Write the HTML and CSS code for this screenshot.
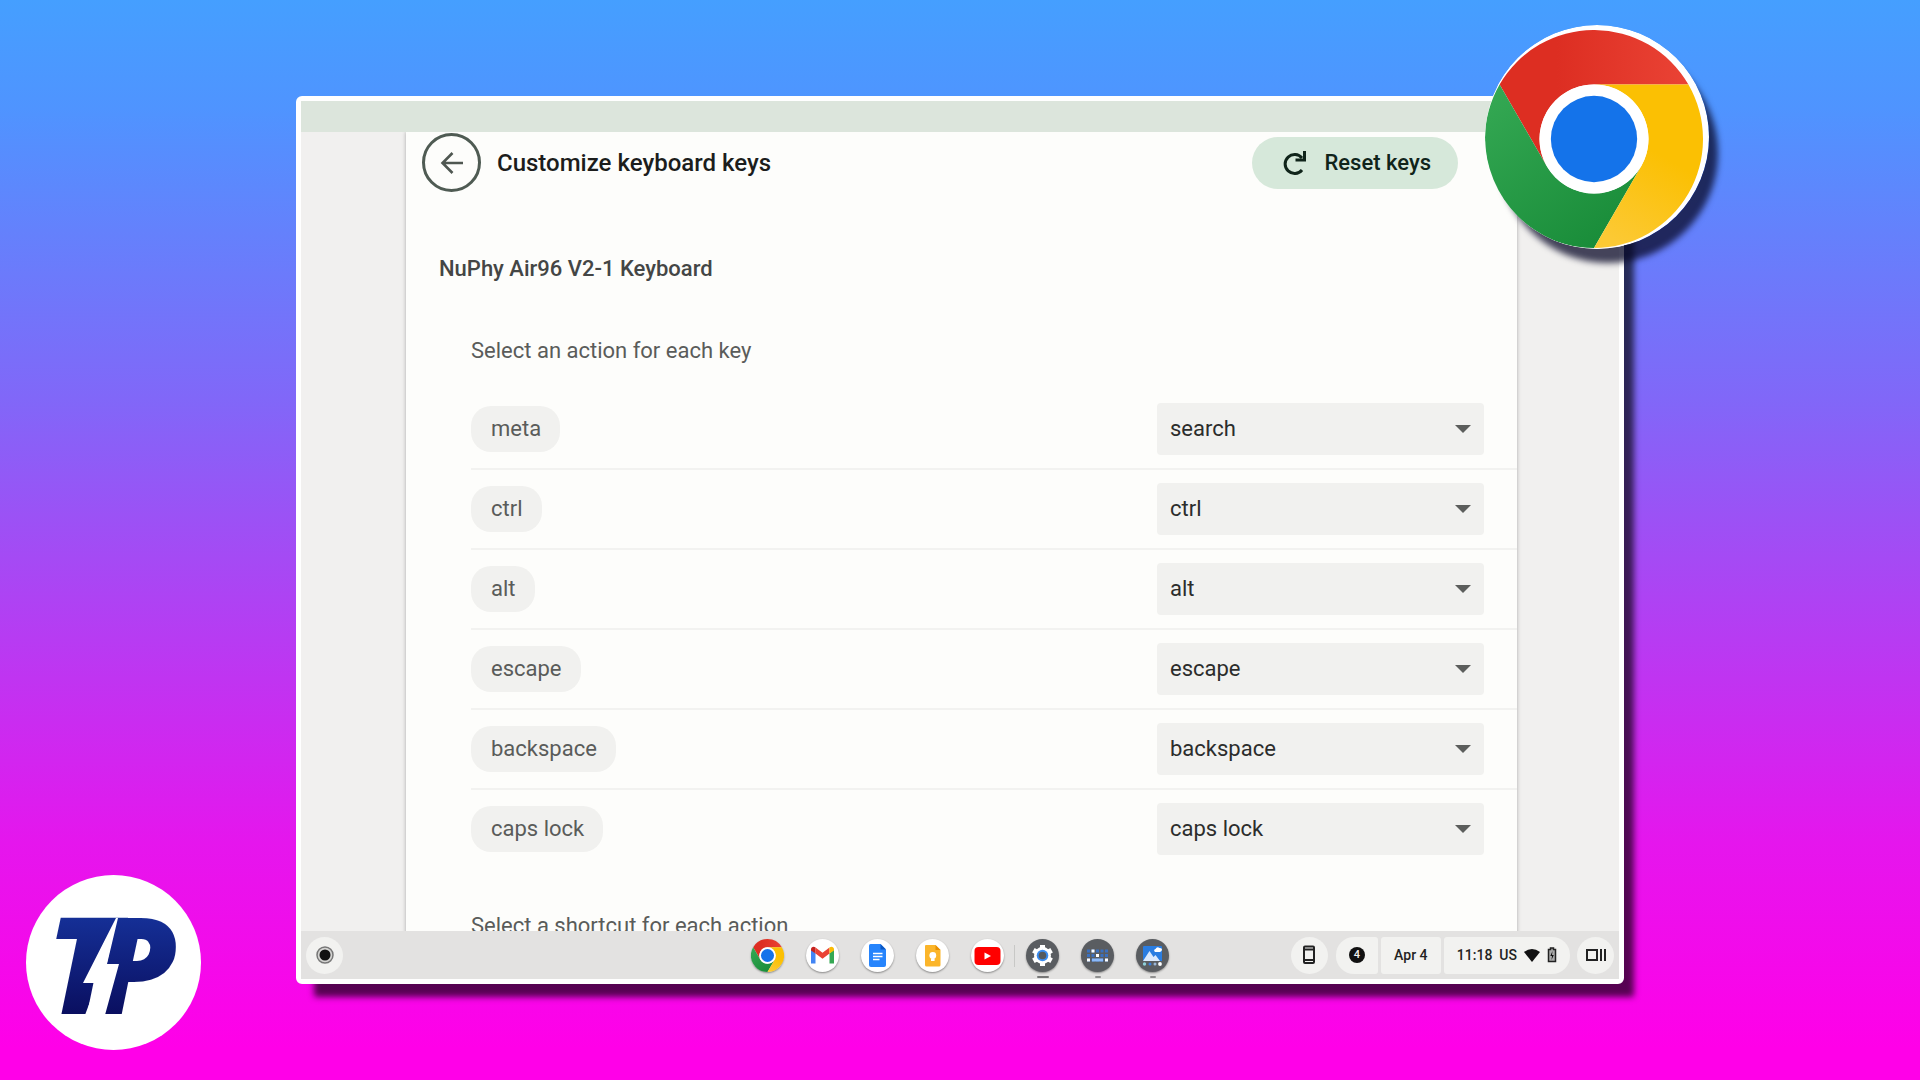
FILE: index.html
```html
<!DOCTYPE html>
<html lang="en">
<head>
  <meta charset="UTF-8" />
  <meta name="viewport" content="width=device-width, initial-scale=1.0"/>
  <title>Customize keyboard keys</title>
  <link rel="stylesheet" href="styles.css">
</head>
<body>

  <main class="screen">
    <div class="title-bar"></div>

    <div class="viewport">
      <div class="page">
        <header class="page-header">
          <button class="back-btn" aria-label="Back">
            <svg width="24" height="24" viewBox="0 0 24 24" fill="none" stroke="#4f5751" stroke-width="2.600"><path d="M23 12H3M12.500 2L2.500 12L12.500 22"/></svg>
          </button>
          <h1>Customize keyboard keys</h1>
          <button class="reset-btn">
            <svg width="26" height="26" viewBox="0 0 26 26" fill="none" stroke="#10241a" stroke-width="3"><path d="M21 20A9.500 9.500 0 1 1 21 8"/><path d="M23.500 1V10H14.500"/></svg>
            Reset keys
          </button>
        </header>

        <h2>NuPhy Air96 V2-1 Keyboard</h2>

        <section class="keys">
          <h3>Select an action for each key</h3>
          <div class="key-row">
            <label class="key" for="meta">meta</label>
            <div class="select-box">
              <select id="meta"><option>search</option><option>ctrl</option><option>alt</option></select>
            </div>
          </div>
          <div class="key-row">
            <label class="key" for="ctrl">ctrl</label>
            <div class="select-box">
              <select id="ctrl"><option>ctrl</option><option>search</option><option>alt</option></select>
            </div>
          </div>
          <div class="key-row">
            <label class="key" for="alt">alt</label>
            <div class="select-box">
              <select id="alt"><option>alt</option><option>search</option><option>ctrl</option></select>
            </div>
          </div>
          <div class="key-row">
            <label class="key" for="escape">escape</label>
            <div class="select-box">
              <select id="escape"><option>escape</option><option>search</option><option>ctrl</option></select>
            </div>
          </div>
          <div class="key-row">
            <label class="key" for="backspace">backspace</label>
            <div class="select-box">
              <select id="backspace"><option>backspace</option><option>search</option><option>ctrl</option></select>
            </div>
          </div>
          <div class="key-row">
            <label class="key" for="caps">caps lock</label>
            <div class="select-box">
              <select id="caps"><option>caps lock</option><option>search</option><option>ctrl</option></select>
            </div>
          </div>
        </section>

        <section class="keys shortcuts">
          <h3>Select a shortcut for each action</h3>
        </section>
      </div>
    </div>

    <footer class="shelf">
      <div class="shelf-start">
        <button class="round-btn" aria-label="Launcher">
          <svg width="18" height="18" viewBox="0 0 18 18"><circle cx="9" cy="9" r="8" fill="#d4d4d2" stroke="#777" stroke-width="1.500"/><circle cx="9" cy="9" r="5.500" fill="#111"/></svg>
        </button>
      </div>

      <nav class="apps">
        <button class="app" aria-label="Chrome">
          <svg viewBox="0 0 48 48"><use href="#chrome"/></svg>
        </button>
        <button class="app white" aria-label="Gmail">
          <svg viewBox="0 0 33 33">
            <path d="M5 10V24.500H9.500V14.500Z" fill="#4285f4"/>
            <path d="M28 10V24.500H23.500V14.500Z" fill="#34a853"/>
            <path d="M9.500 8.500L16.500 13.800L23.500 8.500V14.500L16.500 19.800L9.500 14.500Z" fill="#ea4335"/>
            <path d="M5 10.500C5 7.500 8 7 9.500 8.500V14.500L5 11.500Z" fill="#c5221f"/>
            <path d="M28 10.500C28 7.500 25 7 23.500 8.500V14.500L28 11.500Z" fill="#fbbc04"/>
          </svg>
        </button>
        <button class="app white" aria-label="Docs">
          <svg viewBox="0 0 33 33">
            <path d="M9.500 5H19.500L25 10.500V26Q25 28 23 28H10Q8 28 8 26V6.500Q8 5 9.500 5Z" fill="#2684fc"/>
            <path d="M19.500 5L25 10.500H19.500Z" fill="#0b58c4"/>
            <path d="M12 14.500H21.500M12 17.500H21.500M12 20.500H18.500" stroke="#fff" stroke-width="1.500"/>
          </svg>
        </button>
        <button class="app white" aria-label="Keep">
          <svg viewBox="0 0 33 33">
            <path d="M10 6H19.500L24.500 11V26Q24.500 27.500 23 27.500H10.500Q9 27.500 9 26V7Q9 6 10 6Z" fill="#fbb52a"/>
            <path d="M19.500 6L24.500 11H19.500Z" fill="#e88f00"/>
            <circle cx="16.800" cy="16.500" r="3.400" fill="#fff"/><path d="M15 19.500H18.600V22H15Z" fill="#fff"/>
          </svg>
        </button>
        <button class="app white" aria-label="YouTube">
          <svg viewBox="0 0 33 33"><rect x="3.500" y="8" width="26" height="18" rx="4" fill="#f00"/><path d="M13.500 13.500L20 17L13.500 20.500Z" fill="#fff"/></svg>
        </button>
        <button class="app dark separated running active" aria-label="Settings">
          <svg viewBox="0 0 33 33">
            <circle cx="16.500" cy="16.500" r="8.500" fill="#fff"/>
            <path d="M16.500 6V27M7.400 11.250L25.600 21.750M7.400 21.750L25.600 11.250" stroke="#fff" stroke-width="5"/>
            <circle cx="16.500" cy="16.500" r="5.800" fill="#3b8cf0"/><circle cx="16.500" cy="16.500" r="3.800" fill="#55595e"/>
          </svg>
        </button>
        <button class="app dark running" aria-label="Shortcuts">
          <svg viewBox="0 0 33 33">
            <path d="M6 12H27M6 16.500H27M6 21H27" stroke="#3a70c0" stroke-width="3" stroke-dasharray="3 1.500"/>
            <path d="M11 21H22" stroke="#8ab8f8" stroke-width="3"/>
            <path d="M6 21H9M24 21H27M10.500 12H13.500M15 16.500H18" stroke="#fff" stroke-width="3"/>
          </svg>
        </button>
        <button class="app dark running" aria-label="Screensaver">
          <svg viewBox="0 0 33 33">
            <path d="M8 7H25Q26 7 26 8V22H7V8Q7 7 8 7Z" fill="#2a7de1"/>
            <path d="M7 22L13.500 12L17.500 18L19.500 16L24 22Z" fill="#dbe9fc"/>
            <path d="M19 13Q17 11 19.500 10Q21 7 23.500 9Q27 9 25.500 12L24 13Z" fill="#fff"/>
            <circle cx="8.500" cy="25" r="1.700" fill="#8fd0d8"/><circle cx="14" cy="25" r="1.500" fill="#3b7fe0"/><circle cx="19" cy="25" r="1.500" fill="#9bb8d8"/><circle cx="24" cy="25" r="1.900" fill="#fff"/>
          </svg>
        </button>
      </nav>

      <div class="shelf-end">
        <button class="round-btn phone" aria-label="Phone Hub">
          <svg width="14" height="20" viewBox="0 0 14 20" fill="none" stroke="#222" stroke-width="2"><rect x="2" y="1.500" width="10" height="16.500" rx="1"/><path d="M2 4.500H12M2 15H12"/></svg>
        </button>
        <div class="tray">
          <button class="tray-item notif"><span class="badge">4</span></button>
          <button class="tray-item date">Apr 4</button>
          <button class="tray-item status">
            <span>11:18</span>
            <span>US</span>
            <svg width="16" height="14" viewBox="0 0 16 14"><path d="M0 4Q8 -2 16 4L8 14Z" fill="#111"/></svg>
            <svg width="10" height="16" viewBox="0 0 10 16"><path d="M3.500 1H6.500V2.500H8.500V14.500H1.500V2.500H3.500Z" fill="#aaa" stroke="#222" stroke-width="1.500"/><path d="M5.500 4L3.300 9H5L4.500 13L6.800 8H5Z" fill="#111"/></svg>
          </button>
        </div>
        <button class="round-btn" aria-label="Desks">
          <svg width="22" height="14" viewBox="0 0 22 14" fill="none" stroke="#222" stroke-width="2"><path d="M2 2H12V12H2ZM16 1V13M20 1V13"/></svg>
        </button>
      </div>
    </footer>
  </main>

  <svg class="chrome-logo" viewBox="0 0 224 224" aria-label="Chrome">
    <defs>
      <linearGradient id="red" x1="0" x2="1" y1="0" y2="0"><stop offset="0.300" stop-color="#dd2e22"/><stop offset="1" stop-color="#ea4335"/></linearGradient>
      <linearGradient id="green" x1="0.800" x2="0.100" y1="1" y2="0"><stop offset="0" stop-color="#188b38"/><stop offset="1" stop-color="#34a853"/></linearGradient>
      <linearGradient id="yellow" x1="0.300" x2="0.700" y1="1" y2="0"><stop offset="0" stop-color="#fcc934"/><stop offset="0.600" stop-color="#fbc003"/></linearGradient>
      <symbol id="chrome" viewBox="0 0 48 48">
        <path d="M24 12L44.785 12A24 24 0 0 0 3.215 12L13.608 30A12 12 0 0 1 24 12Z" fill="url(#red)"/>
        <path d="M34.392 30L24 48A24 24 0 0 1 3.215 12L13.608 30A12 12 0 0 0 34.392 30Z" fill="url(#green)"/>
        <path d="M24 12H44.785A24 24 0 0 1 24 48L34.392 30A12 12 0 0 0 24 12Z" fill="url(#yellow)"/>
        <circle cx="24" cy="24" r="12" fill="#fff"/>
        <circle cx="24" cy="24" r="9.500" fill="#1473ea"/>
      </symbol>
    </defs>
    <circle cx="112" cy="112" r="112" fill="#fff"/>
    <use href="#chrome" x="0" y="5" width="218" height="218"/>
  </svg>

  <svg class="brand" viewBox="0 0 175 175" aria-label="TP">
    <defs>
      <linearGradient id="navy" gradientUnits="userSpaceOnUse" x1="0" x2="0" y1="43" y2="139"><stop offset="0" stop-color="#152f96"/><stop offset="1" stop-color="#0a0f60"/></linearGradient>
    </defs>
    <circle cx="87.500" cy="87.500" r="87.500" fill="#fff"/>
    <text class="brand-text" x="20" y="139" fill="url(#navy)">T<tspan x="68">P</tspan></text>
    <path d="M64 44H90L58 108L60 60Z" fill="url(#navy)"/>
    <path d="M84 88L92 44H104L100 88L92 100Z" fill="url(#navy)"/>
    <path d="M90 43L57 108H71L59 140H79L93 89H81L92 43Z" fill="#fff"/>
  </svg>

</body>
</html>
```

FILE: styles.css
```css
* {
  box-sizing: border-box;
}

body {
  margin: 0;
  height: 100vh;
  padding: 96px 296px;
  display: flex;
  background: linear-gradient(#459fff 0%, #4f94ff 10%, #8167f8 37%, #e516ed 78%, #ff00e8 97%);
  font-family: Roboto, sans-serif;
  overflow: hidden;
}

button {
  border: none;
  padding: 0;
  font-family: inherit;
  cursor: pointer;
}

h1, h2, h3 {
  margin: 0;
}

.screen {
  flex: 1;
  display: flex;
  flex-direction: column;
  border: 5px solid #fff;
  border-radius: 6px;
  background: #f1f0ef;
  box-shadow: 14px 17px 6px -4px rgba(0, 0, 0, 0.65);
}

.title-bar {
  height: 31px;
  flex-shrink: 0;
  background: #dce5dc;
}

.viewport {
  flex: 1;
  min-height: 0;
  padding: 0 102px 0 105px;
  overflow: hidden;
}

.page {
  min-height: 100%;
  background: #fdfdfb;
  box-shadow: 0 0 4px rgba(0, 0, 0, 0.3);
}

.page-header {
  display: flex;
  align-items: center;
  height: 61px;
  padding: 0 59px 0 16px;
}

.page-header h1 {
  flex: 1;
  margin-left: 16px;
  font-size: 24px;
  line-height: 32px;
  font-weight: 500;
  color: #1c1d1c;
}

.back-btn {
  display: flex;
  align-items: center;
  justify-content: center;
  width: 59px;
  height: 59px;
  border: 3px solid #4f5b53;
  border-radius: 50%;
  background: none;
}

.reset-btn {
  display: flex;
  align-items: center;
  gap: 17px;
  height: 52px;
  padding: 0 27px 0 29px;
  border-radius: 26px;
  background: #d6e8da;
  color: #10241a;
  font-size: 22px;
  font-weight: 500;
}

.page h2 {
  margin: 60px 0 0 33px;
  font-size: 22px;
  line-height: 32px;
  font-weight: 500;
  color: #444645;
}

.keys {
  margin: 50px 0 0 65px;
}

.keys h3 {
  margin-bottom: 23px;
  font-size: 22px;
  line-height: 32px;
  font-weight: 400;
  color: #5a5c5a;
}

.key-row {
  display: flex;
  align-items: center;
  justify-content: space-between;
  height: 80px;
  padding-right: 33px;
  border-bottom: 2px solid #f2f2f0;
}

.key-row:last-child {
  border-bottom-color: transparent;
}

.key {
  padding: 0 19px 0 20px;
  border-radius: 20px;
  background: #f1f1ef;
  color: #5a5c5a;
  font-size: 22px;
  line-height: 46px;
}

.select-box {
  position: relative;
  width: 327px;
}

.select-box select {
  appearance: none;
  width: 100%;
  height: 52px;
  padding: 0 13px 2px;
  border: none;
  border-radius: 4px;
  background: #f1f1ef;
  color: #2c2d2c;
  font-family: inherit;
  font-size: 22px;
}

.select-box::after {
  content: "";
  position: absolute;
  top: 22px;
  right: 13px;
  border: 8px solid transparent;
  border-top-color: #5c5e5c;
  pointer-events: none;
}

.shortcuts {
  margin-top: 40px;
}

/* shelf */

.shelf {
  display: grid;
  grid-template-columns: 1fr auto 1fr;
  align-items: center;
  flex-shrink: 0;
  height: 48px;
  padding: 0 5px;
  background: #e3e2e1;
}

.shelf-end {
  display: flex;
  justify-content: flex-end;
}

.round-btn {
  display: flex;
  align-items: center;
  justify-content: center;
  width: 37px;
  height: 37px;
  border-radius: 50%;
  background: #f2f2f0;
}

.apps {
  display: flex;
  gap: 22px;
}

.app {
  position: relative;
  width: 33px;
  height: 33px;
  border-radius: 50%;
  background: none;
  box-shadow: 0 1px 2px rgba(0, 0, 0, 0.4);
}

.app svg {
  display: block;
  width: 33px;
  height: 33px;
}

.app.white {
  background: #fff;
}

.app.dark {
  background: #5a5d61;
}

.app.separated::before {
  content: "";
  position: absolute;
  top: 6px;
  left: -12px;
  width: 1px;
  height: 22px;
  background: #c8c8c6;
}

.app.running::after {
  content: "";
  position: absolute;
  top: 37px;
  left: 50%;
  width: 6px;
  height: 2px;
  margin-left: -3px;
  border-radius: 1px;
  background: #909090;
}

.app.active::after {
  width: 12px;
  margin-left: -6px;
  background: #777;
}

.phone {
  margin-right: 8px;
}

.tray {
  display: flex;
  gap: 3px;
  margin-right: 7px;
}

.tray-item {
  display: flex;
  align-items: center;
  justify-content: center;
  height: 37px;
  border-radius: 3px;
  background: #f2f2f0;
  color: #222;
  font-size: 14px;
  font-weight: 500;
}

.notif {
  width: 42px;
  border-radius: 18px 3px 3px 18px;
}

.date {
  width: 60px;
}

.status {
  gap: 7px;
  padding: 0 13px;
  border-radius: 3px 18px 18px 3px;
}

.badge {
  width: 16px;
  border-radius: 50%;
  background: #111;
  color: #f2f2f0;
  font-size: 11px;
  line-height: 16px;
}

/* logos lying over the artwork */

.chrome-logo {
  position: absolute;
  top: 25px;
  right: 211px;
  width: 224px;
  height: 224px;
  border-radius: 50%;
  box-shadow: 11px 16px 6px -2px rgba(10, 10, 40, 0.75);
}

.brand {
  position: absolute;
  left: 26px;
  bottom: 30px;
  width: 175px;
  height: 175px;
}

.brand-text {
  font-family: "Open Sans", sans-serif;
  font-size: 134px;
  font-weight: 800;
  font-style: italic;
}
```
